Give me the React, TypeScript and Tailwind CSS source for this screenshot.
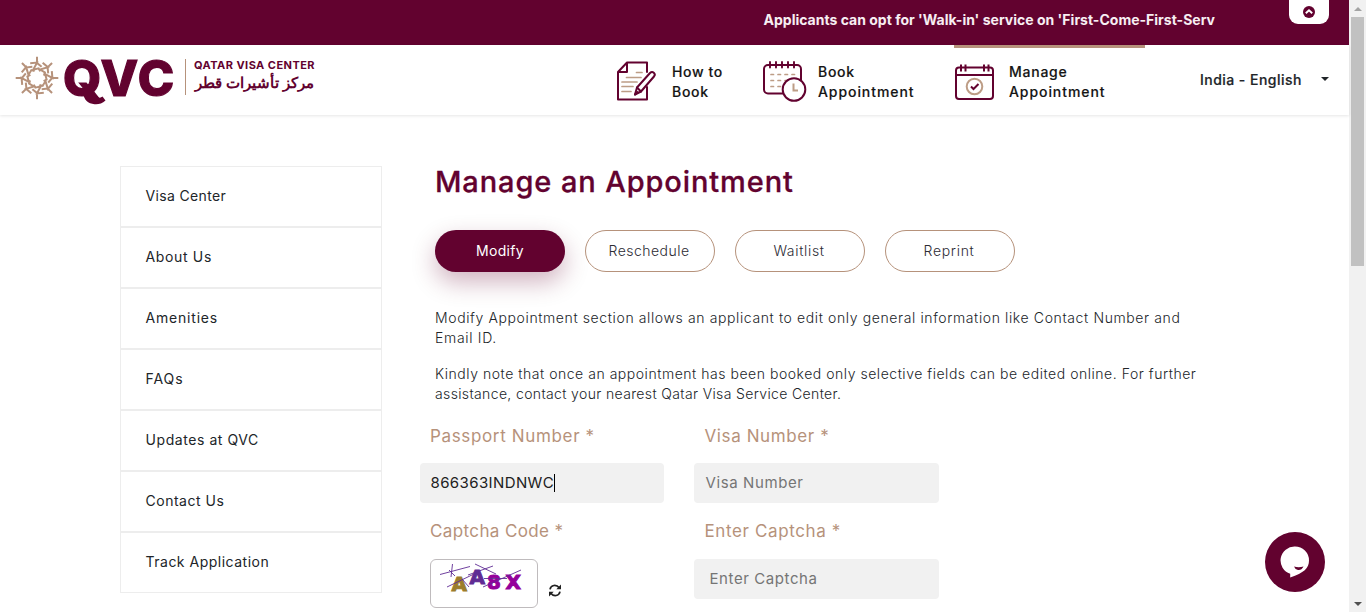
import type { ReactNode } from "react";

const sidebarItems = [
  { label: "Visa Center", tracking: "tracking-[0.35px]" },
  { label: "About Us", tracking: "tracking-[0.65px]" },
  { label: "Amenities", tracking: "tracking-[0.8px]" },
  { label: "FAQs", tracking: "tracking-[0.93px]" },
  { label: "Updates at QVC", tracking: "tracking-[0.57px]" },
  { label: "Contact Us", tracking: "tracking-[0.52px]" },
  { label: "Track Application", tracking: "tracking-[0.5px]" },
];

const tabs = [
  { label: "Reschedule", tracking: "tracking-[0.48px]" },
  { label: "Waitlist", tracking: "tracking-[0.67px]" },
  { label: "Reprint", tracking: "tracking-[0.68px]" },
];

function Emblem() {
  return (
    <svg width="44" height="44" viewBox="-22 -22 44 44" fill="none" stroke="#b6927b" strokeWidth="2">
      {[0, 45, 90, 135, 180, 225, 270, 315].map((a) => (
        <path key={a} transform={`rotate(${a})`} d="M0 -21.300V-15L4.600 -11.200M-6.800 -14.800L0 -15.400L-3.800 -8.200L1.600 -9.600L3.200 -6.600" />
      ))}
    </svg>
  );
}

function NoteIcon() {
  return (
    <svg width="42" height="42" viewBox="0 0 42 42" fill="none" stroke="#62022f" strokeWidth="2" strokeLinejoin="round" strokeLinecap="round">
      <path d="M31 12V2.500H11L2 12V39.500H31V27M11 2.500V12H2" />
      <path stroke="#bd9d86" strokeWidth="1.700" d="M20.500 12.500H26M10.500 17.500H25M6 22H21M6 26.500H17M6 31.500H15" />
      <path fill="#fff" d="M19 34.500L21 27.500L34 13C36.500 10.500 40.300 13.500 38 16.500L25 31.500Z" />
      <path d="M21 27.500L25 31.500M19 34.500L21.500 32" />
    </svg>
  );
}

function BookIcon() {
  return (
    <svg width="46" height="44" viewBox="0 0 46 44" fill="none" stroke="#62022f" strokeWidth="2" strokeLinecap="round">
      <rect x="2" y="6" width="37" height="28.500" rx="4" />
      <path strokeWidth="1.900" d="M8 3V8.500M14 3V8.500M20 3V8.500M26 3V8.500M32 3V8.500" />
      <path stroke="#bd9d86" strokeWidth="1.700" d="M9 15.500H11.500M16 15.500H18.500M23 15.500H25.500M30 15.500H32.500M9 21.500H11.500M16 21.500H18.500M23 21.500H25.500M9 27.500H11.500M16 27.500H18.500" />
      <circle cx="32" cy="30.500" r="11.300" fill="#fff" />
      <path stroke="#bd9d86" d="M31.500 24.500V31.500H36" strokeLinecap="butt" />
    </svg>
  );
}

function ManageIcon() {
  return (
    <svg width="40" height="37" viewBox="0 0 40 37" fill="none" stroke="#62022f" strokeWidth="2">
      <rect x="1" y="3.500" width="37" height="31.500" rx="3" />
      <path d="M1 11H38M6 0.500V7.500M10.500 0.500V7.500M29 0.500V7.500M33.500 0.500V7.500" />
      <circle cx="19.500" cy="22.500" r="7.800" stroke="#bd9d86" />
      <path d="M16 22.500L18.500 25L23.500 20" />
    </svg>
  );
}

function NavItem({ icon, children }: { icon: ReactNode; children: ReactNode }) {
  return (
    <a className="flex items-center text-[14px] font-medium leading-5 text-[#151515] [-webkit-text-stroke:0.15px_#151515]">
      {icon}
      <span>{children}</span>
    </a>
  );
}

function Captcha() {
  return (
    <svg width="106" height="47" viewBox="0 0 106 47" className="font-['DejaVu_Sans',sans-serif] text-[20px] font-bold">
      <g strokeWidth="1">
        <text x="20.500" y="31" fill="#9c7d2c" stroke="#9c7d2c">A</text>
        <text x="38.500" y="24" fill="#602b94" stroke="#602b94">A</text>
        <text x="56" y="29" fill="#94009b" stroke="#94009b">8</text>
        <text x="74.500" y="29" fill="#94009b" stroke="#94009b">X</text>
      </g>
      <path d="M9 14.500L39 6.500M21.500 4L20 17M18 10L24 16M44 4L65 14M62 6L37 15M16 27L43 14M31 19L38 27M52 27L90 10M53 18.500H76" fill="none" stroke="#602b94" strokeWidth="0.9" />
    </svg>
  );
}

export default function App() {
  return (
    <div className="flex h-[612px] w-[1366px] overflow-hidden bg-white font-['Inter','Noto_Sans',sans-serif] text-[#212529]">
      <div className="relative w-[1349px] shrink-0">
        <div className="flex h-[45px] items-start justify-between bg-[#62022f] pl-[763.5px] pr-5">
          <div className="mt-[10px] whitespace-nowrap text-[14px] font-bold leading-5 tracking-[0.01px] text-[#f7eef2]">
            Applicants can opt for 'Walk-in' service on 'First-Come-First-Serv
          </div>
          <button className="flex h-6 w-10 items-center justify-center rounded-b-[9px] bg-white">
            <svg width="12" height="12" viewBox="0 0 12 12">
              <circle cx="6" cy="6" r="6" fill="#62022f" />
              <path d="M2.800 7.300L6 4.200L9.200 7.300" fill="none" stroke="#fff" strokeWidth="1.900" />
            </svg>
          </button>
        </div>

        <header className="relative flex h-[70px] items-start bg-white shadow-[0_1px_3px_rgba(0,0,0,0.1)]">
          <div className="ml-[15px] mt-[11px] flex w-[601px] shrink-0 items-start text-[#62022f]">
            <Emblem />
            <span className="relative -mt-[6px] ml-1 w-[113px] whitespace-nowrap text-[49px] font-extrabold leading-[58px] tracking-[1.4px] [-webkit-text-stroke:1.2px_#62022f]">
              QVC
              <svg className="absolute left-[20px] top-[43px]" width="24" height="12" viewBox="0 0 24 12">
                <path d="M0 0H11C13 5 16 6 19.500 3.500L22.500 7.500C19 11 15 11.500 11.500 11.200C5 10.500 1 7 0 0Z" fill="#62022f" />
              </svg>
            </span>
            <div className="ml-[9px] mt-[3px] h-9 border-l border-[#b6927b] pl-2">
              <div className="whitespace-nowrap text-[11px] font-bold leading-[12px] tracking-[0.45px]">QATAR VISA CENTER</div>
              <div dir="rtl" className="w-[121px] whitespace-nowrap text-center font-['Liberation_Sans',system-ui] text-[14.900px] font-bold leading-[25px]">مركز تأشيرات قطر</div>
            </div>
          </div>
          <nav className="flex items-start pt-[15px]">
            <div className="w-[146px] pt-[2px]">
              <NavItem icon={<span className="-mt-[2px] mr-[14px]"><NoteIcon /></span>}>
                <span className="tracking-[0.65px]">How to</span><br /><span className="tracking-[0.69px]">Book</span>
              </NavItem>
            </div>
            <div className="w-[192px] pt-[1px]">
              <NavItem icon={<span className="-mt-[2px] mr-[10px]"><BookIcon /></span>}>
                <span className="tracking-[0.69px]">Book</span><br /><span className="tracking-[0.93px]">Appointment</span>
              </NavItem>
            </div>
            <div className="w-[246px] pt-[2px]">
              <NavItem icon={<span className="ml-[1px] mr-[14px]"><ManageIcon /></span>}>
                <span className="tracking-[0.75px]">Manage</span><br /><span className="tracking-[0.93px]">Appointment</span>
              </NavItem>
            </div>
            <div className="flex items-center gap-[19px] whitespace-nowrap pt-[10px] text-[14px] font-medium leading-5 tracking-[0.46px] text-[#212529] [-webkit-text-stroke:0.2px_#212529]">
              India - English
              <span className="-mt-[2px] border-x-4 border-t-4 border-x-transparent border-t-[#212529]" />
            </div>
          </nav>
          <div className="absolute left-[954px] top-0 h-[3px] w-[191px] bg-[#b6927b]" />
        </header>

        <div className="flex items-start pl-[120px] pt-[51px]">
          <aside className="w-[262px] shrink-0">
            {sidebarItems.map((item) => (
              <a key={item.label} className={`flex h-[61px] items-center border border-[#ededed] pl-[24.5px] pb-[2px] text-[14px] text-[#212529] ${item.tracking}`}>
                {item.label}
              </a>
            ))}
          </aside>

          <main className="ml-[38px] w-[800px]">
            <h1 className="whitespace-nowrap pl-[15px] text-[29px] font-medium leading-8 tracking-[0.9px] text-[#62022f] [-webkit-text-stroke:0.3px_#62022f]">Manage an Appointment</h1>
            <div className="mt-8 flex gap-5 pl-[15px] text-[14px]">
              <button className="h-[42px] w-[130px] rounded-full bg-[#62022f] pb-[2px] tracking-[0.32px] text-white shadow-[0_10px_24px_rgba(98,2,47,0.3)]">Modify</button>
              {tabs.map((t) => (
                <button key={t.label} className={`h-[42px] w-[130px] rounded-full border border-[#b6927b] pb-[2px] pr-[2px] font-light text-[#2c2c34] ${t.tracking}`}>{t.label}</button>
              ))}
            </div>
            <div className="whitespace-nowrap pl-[15px] pt-9 text-[14px] font-light leading-5 text-[#212529]">
              <p>
                <span className="tracking-[0.615px]">Modify Appointment section allows an applicant to edit only general information like Contact Number and</span><br />
                <span className="tracking-[0.69px]">Email ID.</span>
              </p>
              <p className="mt-4">
                <span className="tracking-[0.53px]">Kindly note that once an appointment has been booked only selective fields can be edited online. For further</span><br />
                <span className="tracking-[0.36px]">assistance, contact your nearest Qatar Visa Service Center.</span>
              </p>
            </div>

            <form className="mt-5 grid w-[519px] grid-cols-[244px_245px] gap-x-[30px] text-[15px]">
              <label className="pl-[10px] text-[17px] leading-6 tracking-[0.65px] text-[#b6927b]">Passport Number *</label>
              <label className="pl-[10.5px] text-[17px] leading-6 tracking-[0.61px] text-[#b6927b]">Visa Number *</label>
              <div className="mt-[15px] flex h-10 items-center rounded bg-[#f1f1f1] pl-[10.5px] tracking-[0.39px] text-[#212121]">
                866363INDNWC<span className="h-[18px] w-px bg-black" />
              </div>
              <div className="mt-[15px] flex h-10 items-center rounded bg-[#f1f1f1] pl-[11.5px] tracking-[0.6px] text-[#757575]">Visa Number</div>
              <label className="mt-4 pl-[10px] text-[17px] leading-6 tracking-[0.38px] text-[#b6927b]">Captcha Code *</label>
              <label className="mt-4 pl-[10.5px] text-[17px] leading-6 tracking-[0.62px] text-[#b6927b]">Enter Captcha *</label>
              <div className="mt-4 flex items-start pl-[10px]">
                <div className="h-[49px] w-[108px] rounded-md border border-[#bfbbbd] bg-white"><Captcha /></div>
                <svg className="ml-[11px] mt-[25px]" width="12" height="13" viewBox="0 0 12 13" fill="none" stroke="#212121" strokeWidth="1.700">
                  <path d="M1 5.300C1.800 0.800 7.500 0.200 10.200 3.800M11 7.700C10.200 12.200 4.500 12.800 1.800 9.200" />
                  <path d="M12 0.500V5.300H7.300ZM0 12.500V7.700H4.700Z" fill="#212121" stroke="none" />
                </svg>
              </div>
              <div className="mt-4 flex h-10 items-center rounded bg-[#f1f1f1] pl-[15.5px] tracking-[0.58px] text-[#757575]">Enter Captcha</div>
            </form>
          </main>
        </div>

        <button className="absolute left-[1265px] top-[532px] flex h-[60px] w-[60px] items-center justify-center rounded-full bg-[#62022f]">
          <svg width="30" height="32" viewBox="0 0 30 32">
            <path d="M15 0.500A14 14 0 0 1 29 14.500C29 22 24 27 10.200 31.500V27.800A14 14 0 0 1 15 0.500Z" fill="#fff" />
            <path d="M14 20.500Q18.700 22 23.500 20.500Q21.500 24.500 18 24Q15 23.500 14 20.500Z" fill="#62022f" />
          </svg>
        </button>
      </div>

      <div className="flex w-[17px] flex-col items-center justify-between bg-[#f1f1f1]">
        <div className="flex flex-col items-center">
          <div className="flex h-[17px] items-center"><span className="border-x-4 border-b-4 border-x-transparent border-b-[#a3a3a3]" /></div>
          <div className="h-[249px] w-[13px] bg-[#c1c1c1]" />
        </div>
        <div className="flex h-[17px] items-center"><span className="border-x-4 border-t-4 border-x-transparent border-t-[#505050]" /></div>
      </div>
    </div>
  );
}
